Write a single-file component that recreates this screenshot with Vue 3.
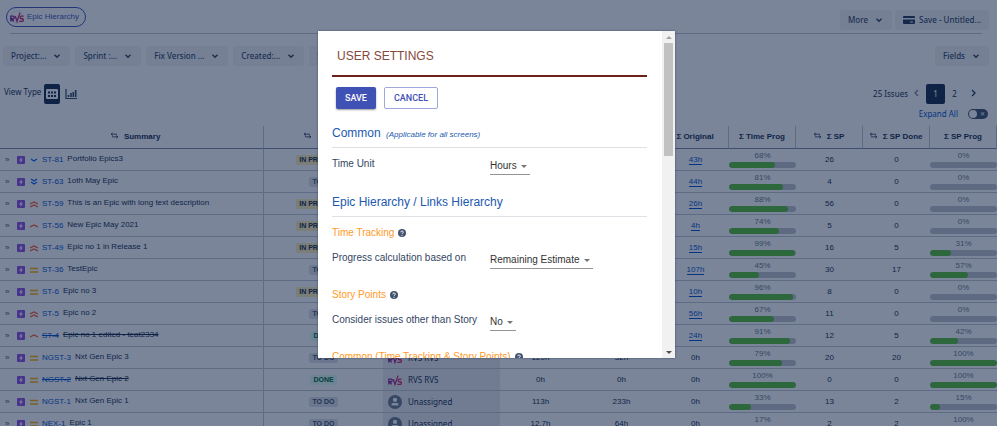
<!-- src/views/EpicHierarchy.vue -->
<template>
  <div class="screen">
    <div class="page">
      <header class="title-bar">
        <a href="#" class="app-pill">
          <svg class="pill-logo" viewBox="0 0 16 16" aria-hidden="true">
            <defs>
              <linearGradient id="rvs-fill" gradientUnits="userSpaceOnUse" x1="0" y1="0" x2="16" y2="0">
                <stop offset="0" stop-color="#7b2a9c" />
                <stop offset="1" stop-color="#e0245e" />
              </linearGradient>
            </defs>
            <circle cx="8" cy="8" r="7" fill="#fff" stroke="#dfe1e6" />
            <path :d="logoPath" fill="none" stroke="url(#rvs-fill)" stroke-width="1.6" />
          </svg>
          Epic Hierarchy
        </a>
        <div class="title-actions">
          <button type="button" class="btn">More <svg class="chevron" viewBox="0 0 8 8"><path d="M2 3l2 2 2-2" /></svg></button>
          <button type="button" class="btn save-filter">
            <svg class="card-icon" viewBox="0 0 12 10" aria-hidden="true">
              <path d="M1 1h10a1 1 0 0 1 1 1v1H0V2a1 1 0 0 1 1-1zM0 4.500h12V8a1 1 0 0 1-1 1H1a1 1 0 0 1-1-1z" fill="#253858" />
              <path d="M7 7h3" stroke="#fff" />
            </svg>
            Save - Untitled...
          </button>
        </div>
      </header>

      <div class="filter-bar">
        <button v-for="filter in filters" :key="filter" type="button" class="btn">
          {{ filter }} <svg class="chevron" viewBox="0 0 8 8"><path d="M2 3l2 2 2-2" /></svg>
        </button>
        <button type="button" class="btn fields-btn">Fields <svg class="chevron" viewBox="0 0 8 8"><path d="M2 3l2 2 2-2" /></svg></button>
      </div>

      <div class="view-bar">
        <div class="view-type">
          <span>View Type</span>
          <button type="button" class="view-btn selected" aria-label="Table view">
            <svg viewBox="0 0 12 12">
              <rect y="1" width="12" height="10" rx="1" fill="#fff" />
              <path d="M2 4.500h2M5 4.500h2M8 4.500h2M2 8h2M5 8h2M8 8h2" stroke="#172b4d" stroke-width="2" />
            </svg>
          </button>
          <button type="button" class="view-btn" aria-label="Chart view">
            <svg viewBox="0 0 12 12">
              <path d="M1 1v9.500h11" fill="none" stroke="#344563" stroke-width="1.200" />
              <path d="M3.500 9V7M6 9V5M8.300 9V4M10.700 9V2" stroke="#344563" stroke-width="1.600" />
            </svg>
          </button>
        </div>
        <div class="view-right">
          <nav class="pager">
            <span>25 Issues</span>
            <button type="button" class="page-arrow faded" aria-label="Previous"><svg viewBox="0 0 8 10"><path d="M5 2L2 5l3 3" /></svg></button>
            <button type="button" class="page-num current">1</button>
            <button type="button" class="page-num">2</button>
            <button type="button" class="page-arrow" aria-label="Next"><svg viewBox="0 0 8 10"><path d="M3 2l3 3-3 3" /></svg></button>
          </nav>
          <div class="expand">
            <label for="expand-all">Expand All</label>
            <span class="toggle">
              <input id="expand-all" type="checkbox" />
              <span class="knob"></span>
              <span class="cross">✕</span>
            </span>
          </div>
        </div>
      </div>

      <table class="grid">
        <colgroup>
          <col />
          <col class="c-status" />
          <col class="c-user" />
          <col class="c-hours" />
          <col class="c-hours" />
          <col v-for="n in 5" :key="n" class="c-num" />
        </colgroup>
        <thead>
          <tr>
            <th v-for="col in columns" :key="col.label">
              <svg v-if="col.sort" class="sort-icon" viewBox="0 0 8 8" aria-hidden="true">
                <path d="M0 2.500h7M2 1L0 2.500 2 4M1 5.500h7M6 4l2 1.500L6 7" fill="none" stroke="#344563" />
              </svg>
              {{ col.label }}
            </th>
          </tr>
        </thead>
        <tbody>
          <tr v-for="row in rows" :key="row.key">
            <td class="summary">
              <div class="summary-line">
                <span class="expander">{{ row.leaf ? '' : '»' }}</span>
                <svg class="epic-icon" viewBox="0 0 16 16" aria-hidden="true">
                  <rect width="16" height="16" rx="2" fill="#904ee2" />
                  <path d="M9.500 2L4 9h3.500L6.500 14 12 7H8.500z" fill="#fff" />
                </svg>
                <svg class="prio-icon" viewBox="0 0 8 8" aria-hidden="true">
                  <path :d="priorities[row.prio].d" fill="none" :stroke="priorities[row.prio].color" stroke-width="1.300" />
                </svg>
                <a href="#" class="key" :class="{ closed: row.closed }">{{ row.key }}</a>
                <span class="name" :class="{ closed: row.closed }">{{ row.name }}</span>
              </div>
            </td>
            <td><span class="lozenge" :class="statusClass(row.status)">{{ row.status }}</span></td>
            <td class="user">
              <div class="user-line">
                <svg v-if="row.user === 'RVS RVS'" viewBox="0 0 16 16" aria-hidden="true">
                  <path :d="logoPath" fill="none" stroke="url(#rvs-fill)" stroke-width="1.500" />
                </svg>
                <svg v-else viewBox="0 0 16 16" aria-hidden="true">
                  <circle cx="8" cy="8" r="8" fill="#6b778c" />
                  <circle cx="8" cy="5.500" r="2.500" fill="#fff" />
                  <path d="M4 12v-1.500A1.500 1.500 0 0 1 5.500 9h5a1.500 1.500 0 0 1 1.500 1.500V12z" fill="#fff" />
                </svg>
                {{ row.user }}
              </div>
            </td>
            <td>{{ row.est }}</td>
            <td>{{ row.spent }}</td>
            <td>
              <a v-if="row.original !== '0h'" href="#" class="hours">{{ row.original }}</a>
              <template v-else>{{ row.original }}</template>
            </td>
            <td class="prog">
              <span>{{ row.time }}%</span>
              <div class="track"><div class="fill" :style="{ width: row.time + '%' }"></div></div>
            </td>
            <td>{{ row.sp }}</td>
            <td>{{ row.done }}</td>
            <td class="prog">
              <span>{{ row.spProg }}%</span>
              <div class="track"><div class="fill" :style="{ width: row.spProg + '%' }"></div></div>
            </td>
          </tr>
        </tbody>
      </table>
    </div>

    <div class="overlay">
      <section class="dialog" role="dialog" aria-labelledby="dialog-title">
        <div class="dialog-body">
          <h1 id="dialog-title">USER SETTINGS</h1>
          <div class="dialog-actions">
            <button type="button" class="mui-btn save">SAVE</button>
            <button type="button" class="mui-btn cancel">CANCEL</button>
          </div>

          <h2>Common <em>(Applicable for all screens)</em></h2>
          <div class="setting compact">
            <label for="time-unit">Time Unit</label>
            <div class="select-box">
              <select id="time-unit"><option>Hours</option></select>
            </div>
          </div>

          <h2>Epic Hierarchy / Links Hierarchy</h2>
          <template v-for="group in groups" :key="group.title">
            <h3>
              {{ group.title }}
              <svg viewBox="0 0 16 16" aria-hidden="true">
                <circle cx="8" cy="8" r="8" fill="#42526e" />
                <path d="M5.500 6.500a2.500 2.500 0 1 1 3.500 2.200c-.7.400-1 .7-1 1.500" fill="none" stroke="#fff" stroke-width="1.800" />
                <circle cx="8" cy="12.500" r="1.200" fill="#fff" />
              </svg>
            </h3>
            <div v-if="group.label" class="setting">
              <label :for="group.id">{{ group.label }}</label>
              <div class="select-box">
                <select :id="group.id"><option>{{ group.value }}</option></select>
              </div>
            </div>
          </template>
        </div>
        <div class="scrollbar" aria-hidden="true">
          <span class="arrow up"></span>
          <span class="thumb"></span>
          <span class="arrow down"></span>
        </div>
      </section>
    </div>
  </div>
</template>

<script setup>
const logoPath = 'M1 13V7h3q1.500 1.500 0 3H1l3.500 3M6 7l2 6 3.500-10M15.500 7h-3q-1.500 1.500 0 3h2q1.500 1.500 0 3h-4'

const filters = ['Project:...', 'Sprint :...', 'Fix Version ...', 'Created:...', 'Status:...']

const columns = [
  { label: 'Summary', sort: true },
  { label: 'Status', sort: true },
  { label: 'Assignee', sort: true },
  { label: 'Σ Rem', sort: true },
  { label: 'Σ Spent', sort: true },
  { label: 'Σ Original' },
  { label: 'Σ Time Prog' },
  { label: 'Σ SP', sort: true },
  { label: 'Σ SP Done', sort: true },
  { label: 'Σ SP Prog' }
]

const priorities = {
  low: { d: 'M1 3l3 2 3-2', color: '#0065ff' },
  lowest: { d: 'M1 1l3 2 3-2M1 4l3 2 3-2', color: '#0065ff' },
  high: { d: 'M0 5l4-2 4 2', color: '#ff5630' },
  highest: { d: 'M0 4l4-2 4 2M0 7l4-2 4 2', color: '#ff5630' },
  medium: { d: 'M0 2.500h8M0 6h8', color: '#ffab00' }
}

const rows = [
  { key: 'ST-81', name: 'Portfolio Epics3', prio: 'low', status: 'IN PROGRESS', user: 'Unassigned', est: '20h', spent: '43h', original: '43h', time: 68, sp: 26, done: 0, spProg: 0 },
  { key: 'ST-63', name: '1oth May Epic', prio: 'lowest', status: 'TO DO', user: 'Unassigned', est: '10h', spent: '44h', original: '44h', time: 81, sp: 4, done: 0, spProg: 0 },
  { key: 'ST-59', name: 'This is an Epic with long text description', prio: 'highest', status: 'IN PROGRESS', user: 'Unassigned', est: '4h', spent: '26h', original: '26h', time: 88, sp: 56, done: 0, spProg: 0 },
  { key: 'ST-56', name: 'New Epic May 2021', prio: 'high', status: 'IN PROGRESS', user: 'Unassigned', est: '1h', spent: '4h', original: '4h', time: 74, sp: 5, done: 0, spProg: 0 },
  { key: 'ST-49', name: 'Epic no 1 in Release 1', prio: 'highest', status: 'IN PROGRESS', user: 'Unassigned', est: '1h', spent: '15h', original: '15h', time: 99, sp: 16, done: 5, spProg: 31 },
  { key: 'ST-36', name: 'TestEpic', prio: 'medium', status: 'TO DO', user: 'Unassigned', est: '60h', spent: '48h', original: '107h', time: 45, sp: 30, done: 17, spProg: 57 },
  { key: 'ST-6', name: 'Epic no 3', prio: 'medium', status: 'IN PROGRESS', user: 'Unassigned', est: '1h', spent: '9h', original: '10h', time: 96, sp: 8, done: 0, spProg: 0 },
  { key: 'ST-5', name: 'Epic no 2', prio: 'highest', status: 'TO DO', user: 'Unassigned', est: '18h', spent: '38h', original: '56h', time: 67, sp: 11, done: 0, spProg: 0 },
  { key: 'ST-4', name: 'Epic no 1 edited - teat2334', prio: 'high', closed: true, status: 'DONE', user: 'Unassigned', est: '2h', spent: '22h', original: '24h', time: 91, sp: 12, done: 5, spProg: 42 },
  { key: 'NGST-3', name: 'Nxt Gen Epic 3', prio: 'medium', status: 'TO DO', user: 'RVS RVS', est: '120h', spent: '32h', original: '0h', time: 79, sp: 20, done: 20, spProg: 100 },
  { key: 'NGST-2', name: 'Nxt Gen Epic 2', prio: 'medium', closed: true, leaf: true, status: 'DONE', user: 'RVS RVS', est: '0h', spent: '0h', original: '0h', time: 100, sp: 0, done: 0, spProg: 100 },
  { key: 'NGST-1', name: 'Nxt Gen Epic 1', prio: 'medium', status: 'TO DO', user: 'Unassigned', est: '113h', spent: '233h', original: '0h', time: 33, sp: 13, done: 2, spProg: 15 },
  { key: 'NEX-1', name: 'Epic 1', prio: 'medium', status: 'TO DO', user: 'Unassigned', est: '12.7h', spent: '64h', original: '0h', time: 17, sp: 2, done: 2, spProg: 100 }
]

const groups = [
  { title: 'Time Tracking', id: 'progress-basis', label: 'Progress calculation based on', value: 'Remaining Estimate' },
  { title: 'Story Points', id: 'other-issues', label: 'Consider issues other than Story', value: 'No' },
  { title: 'Common (Time Tracking & Story Points)' }
]

function statusClass(status) {
  if (status === 'DONE') return 'done'
  return status === 'TO DO' ? 'todo' : 'progress'
}
</script>

<style>
body {
  margin: 0;
  overflow: hidden;
}
</style>

<style scoped>
.screen {
  position: relative;
  height: 100vh;
  margin-right: 1px;
  overflow: hidden;
  font: 8px/12px "Liberation Sans", Arial, sans-serif;
  color: #172b4d;
}

button,
select {
  font: inherit;
  color: inherit;
  border: 0;
  margin: 0;
  padding: 0;
  background: none;
}

a {
  color: #0052cc;
  text-decoration: none;
}

.title-bar {
  display: flex;
  justify-content: space-between;
  margin: 0 15px 0 10px;
  padding: 7px 0 6px;
  height: 20px;
  border-bottom: 1px solid #c1c7d0;
}

.app-pill {
  display: flex;
  align-items: center;
  gap: 3px;
  height: 18px;
  margin-left: -4px;
  padding: 0 6px 0 3px;
  border: 1px solid #3f51b5;
  border-radius: 10px;
  color: #3f51b5;
}

.pill-logo {
  width: 14px;
  height: 14px;
}

.title-actions {
  display: flex;
  gap: 3px;
  margin: 3px -7px 0 0;
}

.btn {
  display: flex;
  align-items: center;
  gap: 6px;
  height: 20px;
  padding: 0 8px;
  border-radius: 2px;
  background: #f4f5f7;
  color: #344563;
  font: 500 8px/20px "Noto Sans", sans-serif;
  white-space: nowrap;
}

.btn.save-filter {
  gap: 4px;
}

.chevron {
  width: 10px;
  height: 10px;
  fill: none;
  stroke: #344563;
  stroke-width: 1.2;
}

.card-icon {
  width: 12px;
  height: 10px;
}

.filter-bar {
  display: flex;
  gap: 5px;
  padding: 12px 8px 0 3px;
}

.fields-btn {
  margin-left: auto;
}

.view-bar {
  display: flex;
  justify-content: space-between;
  padding: 18px 9px 0 4px;
  font-family: "Noto Sans", sans-serif;
}

.view-type {
  display: flex;
  gap: 3px;
}

.view-type > span {
  padding-top: 2px;
}

.view-btn {
  display: flex;
  align-items: center;
  justify-content: center;
  width: 16px;
  height: 20px;
  border-radius: 2px;
}

.view-btn svg {
  width: 12px;
  height: 12px;
}

.view-btn.selected {
  background: #172b4d;
}

.view-right {
  display: flex;
  flex-direction: column;
  gap: 4px;
}

.pager {
  display: flex;
  align-items: center;
  margin-right: 6px;
}

.page-arrow {
  width: 18px;
  height: 20px;
}

.page-arrow svg {
  width: 8px;
  height: 10px;
  fill: none;
  stroke: #172b4d;
  stroke-width: 1.2;
}

.page-arrow.faded {
  opacity: 0.6;
}

.page-num {
  width: 19px;
  height: 20px;
}

.page-num.current {
  background: #172b4d;
  border-radius: 2px;
  color: #fff;
}

.expand {
  display: flex;
  justify-content: flex-end;
  align-items: center;
  gap: 10px;
  color: #0052cc;
}

.toggle {
  display: flex;
  align-items: center;
  justify-content: space-between;
  position: relative;
  box-sizing: border-box;
  width: 20px;
  height: 10px;
  padding: 0 3px 0 1px;
  border-radius: 5px;
  background: #42526e;
}

.toggle input {
  position: absolute;
  inset: 0;
  margin: 0;
  opacity: 0;
}

.knob {
  width: 8px;
  height: 8px;
  border-radius: 50%;
  background: #fff;
}

.cross {
  color: #fff;
  font: 6px/8px "DejaVu Sans", sans-serif;
}

.grid {
  width: 100%;
  margin-top: 6px;
  table-layout: fixed;
  border-collapse: separate;
  border-spacing: 0;
}

.c-status {
  width: 119px;
}

.c-user {
  width: 117px;
}

.c-hours {
  width: 81px;
}

.c-num {
  width: 67px;
}

.grid th {
  height: 22px;
  padding: 0;
  border-right: 1px solid #c1c7d0;
  border-bottom: 1px solid #7a869a;
  font-weight: 700;
  white-space: nowrap;
}

.grid th:first-child {
  padding-left: 8px;
}

.sort-icon {
  width: 7px;
  height: 7px;
  margin-right: 4px;
}

.grid td {
  box-sizing: border-box;
  height: 22px;
  padding: 0;
  border-bottom: 1px solid #c1c7d0;
  text-align: center;
  white-space: nowrap;
}

.grid td.summary {
  border-right: 1px solid #c1c7d0;
}

.summary-line {
  display: flex;
  align-items: center;
  padding-left: 5px;
}

.expander {
  width: 12px;
  text-align: left;
  color: #42526e;
}

.epic-icon {
  width: 8px;
  height: 8px;
  margin-right: 5px;
}

.prio-icon {
  width: 8px;
  height: 8px;
  margin-right: 4px;
}

.name {
  margin-left: 4px;
  padding-bottom: 2px;
}

.closed {
  text-decoration: line-through;
}

.lozenge {
  display: inline-block;
  padding: 0 3px;
  border-radius: 2px;
  font-weight: 700;
  font-size: 7px;
  line-height: 10px;
}

.todo {
  background: #dfe1e6;
  color: #42526e;
}

.progress {
  background: #fff0b3;
  color: #172b4d;
}

.done {
  background: #e3fcef;
  color: #006644;
}

.grid td.user {
  background: #ebecf0;
  font-family: "Noto Sans", sans-serif;
}

.user-line {
  display: flex;
  align-items: center;
  gap: 6px;
  padding-left: 5px;
}

.user-line svg {
  width: 14px;
  height: 14px;
}

.hours {
  border-bottom: 1px solid #0052cc;
}

.prog {
  color: #6b778c;
}

.prog span {
  display: block;
  line-height: 10px;
}

.track {
  height: 6px;
  margin-top: 1px;
  border-radius: 3px;
  background: #c1c4ca;
  overflow: hidden;
}

.fill {
  height: 6px;
  border-radius: 3px;
  background: #57bf36;
}

.overlay {
  position: absolute;
  inset: 0;
  display: flex;
  justify-content: center;
  align-items: flex-start;
  padding: 31px 4px 0 0;
  background: rgba(9, 30, 66, 0.54);
}

.dialog {
  display: flex;
  width: 357px;
  height: calc(100vh - 99px);
  background: #fff;
  box-shadow: 0 0 2px rgba(9, 30, 66, 0.5);
  overflow: hidden;
}

.dialog-body {
  flex: 1;
  padding: 0 15px 0 14px;
  overflow: hidden;
  font-size: 10px;
  color: #344563;
}

h1 {
  margin: 0;
  padding: 18px 0 11px 5px;
  border-bottom: 2px solid #6b2018;
  color: #83493c;
  font-size: 12px;
  font-weight: 400;
  line-height: 15px;
}

.dialog-actions {
  display: flex;
  gap: 8px;
  padding: 10px 4px;
}

.mui-btn {
  height: 22px;
  padding: 0 9px;
  border-radius: 2px;
  font: 500 9px/20px Roboto, sans-serif;
}

.save {
  background: #3f51b5;
  color: #fff;
  box-shadow: 0 1px 2px rgba(0, 0, 0, 0.4);
}

.cancel {
  border: 1px solid #9fa8da;
  color: #3f51b5;
}

h2 {
  margin: 0 0 10px;
  padding: 6px 0;
  border-bottom: 1px solid #dfe1e6;
  color: #2358b0;
  font-size: 12px;
  font-weight: 400;
  line-height: 16px;
}

h2 em {
  margin-left: 2px;
  font-size: 8px;
  line-height: 8px;
}

.setting {
  display: flex;
  height: 37px;
  line-height: 12px;
}

.setting.compact {
  height: 30px;
}

.setting label {
  width: 158px;
}

.select-box {
  display: flex;
  align-items: center;
  height: 16px;
  padding-right: 3px;
  border-bottom: 1px solid #949494;
}

.select-box::after {
  content: "";
  margin-left: 4px;
  border: 3px solid transparent;
  border-top-color: #757575;
  border-bottom: 0;
}

.select-box select {
  appearance: none;
  color: #333;
}

h3 {
  display: flex;
  align-items: center;
  gap: 4px;
  margin: 0 0 13px;
  color: #ff991f;
  font-size: 10px;
  font-weight: 400;
  line-height: 12px;
}

h3 svg {
  width: 8px;
  height: 8px;
}

.scrollbar {
  display: flex;
  flex-direction: column;
  align-items: center;
  width: 13px;
  background: #f1f1f1;
}

.arrow {
  border: 3px solid transparent;
}

.arrow.up {
  margin: 5px 0 4px;
  border-top: 0;
  border-bottom-color: #a3a3a3;
}

.arrow.down {
  margin: auto 0 4px;
  border-bottom: 0;
  border-top-color: #505050;
}

.thumb {
  width: 9px;
  height: 113px;
  background: #c1c1c1;
}
</style>
